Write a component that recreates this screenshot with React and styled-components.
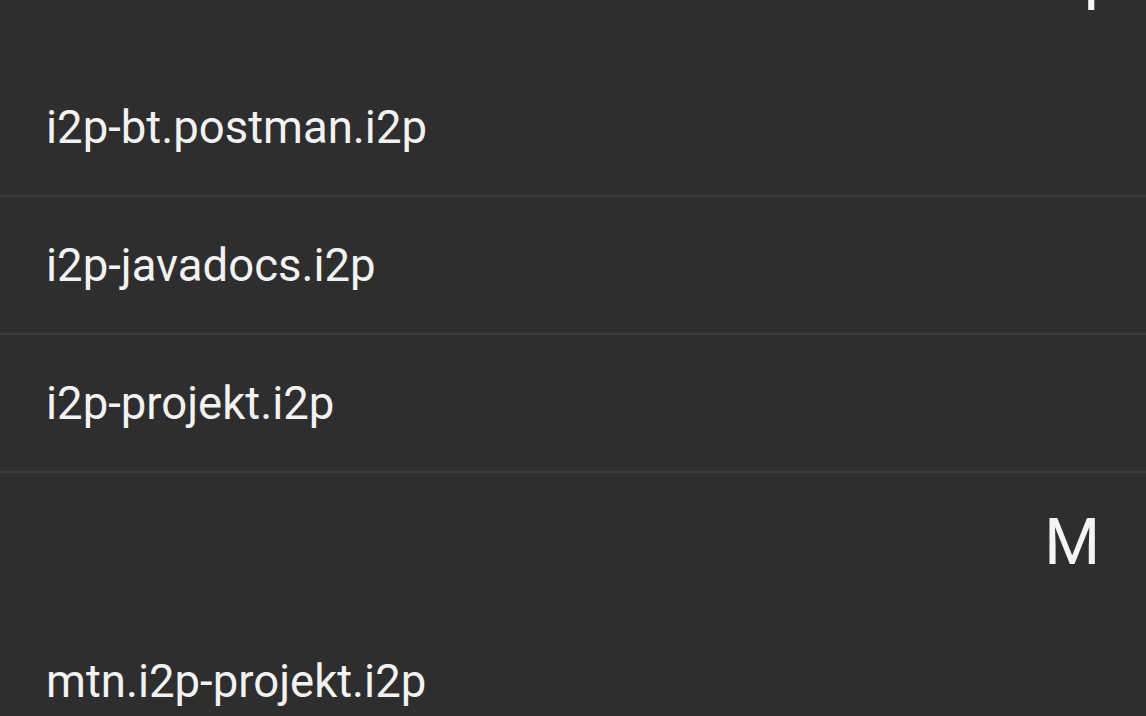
import React from "react";
import styled, { createGlobalStyle } from "styled-components";

const Global = createGlobalStyle`
  html, body {
    margin: 0;
    padding: 0;
    background: #2e2e2e;
    overflow: hidden;
  }
  body {
    font-family: Roboto, "Noto Sans", "Liberation Sans", sans-serif;
  }
`;

const Screen = styled.div`
  width: 1146px;
  height: 716px;
  overflow: hidden;
  background: #2e2e2e;
`;

const List = styled.div`
  display: flex;
  flex-direction: column;
  margin-top: -81px;
`;

const SectionHeader = styled.div`
  height: 140px;
  display: flex;
  align-items: center;
  justify-content: flex-end;
  padding-right: 46px;
  color: #f4f4f4;
  font-size: 64px;
  font-weight: 400;
  line-height: 1;
`;

const Row = styled.div`
  height: 136px;
  display: flex;
  align-items: center;
  padding-left: 46px;
  border-bottom: 2px solid ${(p) => (p.$last ? "transparent" : "#3b3b3b")};
  color: #f2f2f2;
  font-size: 45.5px;
  font-weight: 400;
  letter-spacing: 0;
`;

const sections = [
  { letter: "I", items: ["i2p-bt.postman.i2p", "i2p-javadocs.i2p", "i2p-projekt.i2p"] },
  { letter: "M", items: ["mtn.i2p-projekt.i2p"] },
];

export default function App() {
  return (
    <Screen>
      <Global />
      <List>
        {sections.map((s) => (
          <React.Fragment key={s.letter}>
            <SectionHeader>{s.letter}</SectionHeader>
            {s.items.map((it) => (
              <Row key={it}>{it}</Row>
            ))}
          </React.Fragment>
        ))}
      </List>
    </Screen>
  );
}
